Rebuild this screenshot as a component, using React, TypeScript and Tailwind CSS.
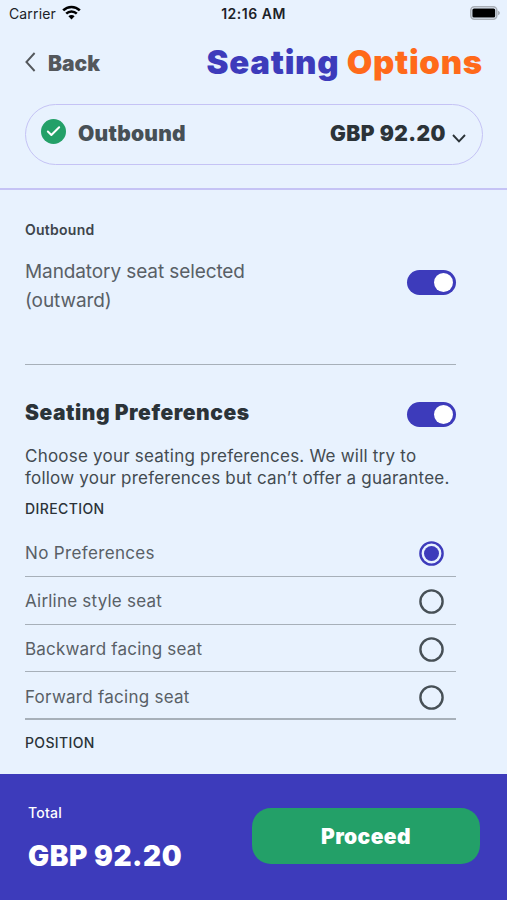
import { useState } from "react";
import { Check } from "lucide-react";

const directions = [
  { id: "none", label: "No Preferences", text: "tracking-[0.35px]" },
  { id: "airline", label: "Airline style seat", text: "tracking-[0.22px]" },
  { id: "backward", label: "Backward facing seat", text: "tracking-[0.2px]" },
  { id: "forward", label: "Forward facing seat", text: "tracking-[0.26px]" },
];

function StatusBar() {
  return (
    <div className="flex h-7 items-center justify-between pl-[9px] pr-[7px] text-[14px] text-[#1c2228]">
      <div className="flex w-40 items-center gap-1.5">
        <span className="-mt-0.5 tracking-[0.01em]">Carrier</span>
        <svg width="19" height="15" viewBox="0 0 19 15" fill="none" className="-mt-[3px]">
          <path d="M1.2 5.4a11.8 11.8 0 0 1 16.6 0" stroke="#000" strokeWidth="2.6" />
          <path d="M4.2 8.6a7.5 7.5 0 0 1 10.6 0" stroke="#000" strokeWidth="2.5" />
          <path d="M9.5 14.4 6.4 11.2a4.4 4.4 0 0 1 6.2 0z" fill="#000" />
        </svg>
      </div>
      <span className="-mt-0.5 mr-0.5 font-semibold tracking-[0.5px]">12:16 AM</span>
      <div className="flex w-40 justify-end">
        <svg width="30" height="14" viewBox="0 0 30 14" className="-mt-0.5">
          <rect x="0.8" y="0.8" width="26" height="12.4" rx="3.6" fill="#e8f2fe" stroke="#a9afb7" strokeWidth="1.6" />
          <rect x="2.4" y="2.4" width="22.8" height="9.2" rx="1.6" fill="#000" />
          <path d="M28 4.8c1.3.5 1.9 1.2 1.9 2.2s-.6 1.7-1.9 2.2z" fill="#a9afb7" />
        </svg>
      </div>
    </div>
  );
}

function Toggle({ on, onChange }: { on: boolean; onChange: () => void }) {
  return (
    <button
      role="switch"
      aria-checked={on}
      onClick={onChange}
      className={`flex h-[25px] w-[49px] shrink-0 items-center rounded-full px-[3px] ${on ? "justify-end bg-[#3d3bbb]" : "justify-start bg-gray-400"}`}
    >
      <span className="size-[19px] rounded-full bg-white" />
    </button>
  );
}

function Radio({ checked }: { checked: boolean }) {
  return (
    <svg width="25" height="25" viewBox="0 0 25 25" fill="none" className={checked ? "text-[#3d3bbb]" : "text-[#475056]"}>
      <circle cx="12.5" cy="12.5" r="11.1" stroke="currentColor" strokeWidth="2.4" />
      {checked && <circle cx="12.5" cy="12.5" r="7.5" fill="currentColor" />}
    </svg>
  );
}

export default function App() {
  const [mandatory, setMandatory] = useState(true);
  const [preferences, setPreferences] = useState(true);
  const [direction, setDirection] = useState("none");

  return (
    <div className="flex h-[900px] w-[507px] flex-col overflow-hidden bg-[#e8f2fe] font-['Inter','Liberation_Sans',sans-serif] text-[#2b3338]">
      <StatusBar />

      {/* Header */}
      <header className="h-[162px] shrink-0 border-b-2 border-[#c5c3f5] px-[25px]">
        <div className="flex h-[76px] items-center justify-between">
          <button className="-mt-[5px] flex items-center text-[21px] font-black leading-none text-[#54585c]">
            <svg width="11" height="20" viewBox="0 0 11 20" fill="none" className="-mt-1 mr-3">
              <path d="M9.6 1 1.4 10l8.2 9" stroke="currentColor" strokeWidth="1.9" />
            </svg>
            <span>Back</span>
          </button>
          <h1 className="-mr-px -mt-2 whitespace-nowrap text-[33px] font-black leading-none tracking-[0.72px] text-[#3d3bbb]">
            Seating <span className="text-[#ff6a1a]">Options</span>
          </h1>
        </div>
        <div className="flex h-[61px] w-[458px] items-center rounded-full border-[1.5px] border-[#c5c3f5] pl-[15px] pr-4">
          <span className="-mt-1.5 flex size-[25px] items-center justify-center rounded-full bg-[#23a068]">
            <Check className="size-[17px] text-white" strokeWidth={2.8} />
          </span>
          <span className="-mt-0.5 ml-3 text-[21px] font-black leading-none tracking-[0.25px] text-[#475056]">
            Outbound
          </span>
          <span className="-mt-0.5 ml-auto text-[21px] font-black leading-none tracking-[0.45px]">GBP 92.20</span>
          <svg width="14" height="9" viewBox="0 0 14 9" fill="none" className="ml-1.5 mt-[7px]">
            <path d="m1 1 6 6.4L13 1" stroke="currentColor" strokeWidth="1.9" />
          </svg>
        </div>
      </header>

      {/* Options */}
      <main className="min-h-0 flex-1 overflow-hidden pl-[25px] pr-[51px] pt-[30px]">
        <h2 className="text-[14px] font-semibold leading-5 tracking-[0.25px] text-[#3d454b]">Outbound</h2>
        <div className="mt-[17px] flex h-[108px] justify-between border-b border-[#a7b0b9]">
          <p className="w-[240px] text-[19px] leading-[29px] tracking-[-0.1px] text-[#596066]">
            Mandatory seat selected (outward)
          </p>
          <div className="pt-[13px]">
            <Toggle on={mandatory} onChange={() => setMandatory(!mandatory)} />
          </div>
        </div>

        <div className="mt-[37px] flex items-center justify-between">
          <h2 className="-mt-[3px] text-[21px] font-black leading-6 tracking-[0.54px]">Seating Preferences</h2>
          <Toggle on={preferences} onChange={() => setPreferences(!preferences)} />
        </div>
        <p className="mt-[18px] whitespace-nowrap text-[17px] leading-[22px] tracking-[0.22px] text-[#434b51]">
          Choose your seating preferences. We will try to
          <br />
          follow your preferences but can’t offer a guarantee.
        </p>

        <h3 className="mt-2.5 text-[14px] font-medium leading-5 tracking-[0.4px]">DIRECTION</h3>
        <div className="mt-[10px]">
          {directions.map((item) => (
            <button
              key={item.id}
              onClick={() => setDirection(item.id)}
              className="flex h-[47.8px] w-full items-center justify-between border-b-[1.5px] border-[#a7b0b9] pr-3 pt-[3px] text-left text-[17px] text-[#596066] last:border-b-2 last:pt-1"
            >
              <span className={item.text}>{item.label}</span>
              <Radio checked={direction === item.id} />
            </button>
          ))}
        </div>
        <h3 className="mt-[13px] text-[14px] font-medium leading-5 tracking-[0.35px]">POSITION</h3>
      </main>

      {/* Total */}
      <footer className="flex h-[126px] shrink-0 items-start justify-between bg-[#3d3bbb] pl-7 pr-[27px] pt-[34px] text-white">
        <div>
          <p className="-mt-[5px] text-[14px] font-medium leading-5 tracking-[0.25px]">Total</p>
          <p className="mt-[17px] text-[28px] font-black leading-8 tracking-[0.55px]">GBP 92.20</p>
        </div>
        <button className="h-14 w-[228px] rounded-[19px] bg-[#23a068] pt-px text-[21px] font-black tracking-[0.4px]">
          Proceed
        </button>
      </footer>
    </div>
  );
}
